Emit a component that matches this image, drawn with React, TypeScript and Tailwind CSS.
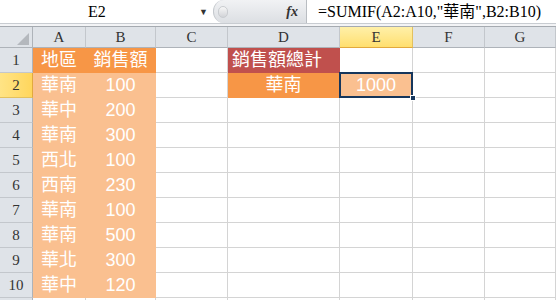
import React from 'react';

const cols = ['A', 'B', 'C', 'D', 'E', 'F', 'G'];

const data: [string, string][] = [
  ['華南', '100'],
  ['華中', '200'],
  ['華南', '300'],
  ['西北', '100'],
  ['西南', '230'],
  ['華南', '100'],
  ['華南', '500'],
  ['華北', '300'],
  ['華中', '120'],
];

const cellFont = { fontFamily: '"Liberation Sans", "Noto Sans CJK TC", sans-serif' };
const headFont = { fontFamily: '"Liberation Serif", "Noto Sans CJK TC", serif' };

type Cell = { text?: string; cls?: string; align?: string };

const App = () => {
  // rows of cells for columns A..G
  const rows: Cell[][] = [];
  for (let r = 1; r <= 11; r++) {
    const row: Cell[] = cols.map(() => ({}));
    if (r === 1) {
      row[0] = { text: '地區', cls: 'bg-[#f79646] border-[#f79646]' };
      row[1] = { text: '銷售額', cls: 'bg-[#f79646] border-[#f79646]' };
      row[3] = { text: '銷售額總計', cls: 'bg-[#c0504d] border-[#c0504d]', align: 'justify-start pl-[4px]' };
    } else if (r <= 10) {
      const d = data[r - 2];
      row[0] = { text: d[0], cls: 'bg-[#fac090] border-[#fac090]' };
      row[1] = { text: d[1], cls: 'bg-[#fac090] border-[#fac090]' };
      if (r === 2) {
        row[3] = { text: '華南', cls: 'bg-[#f79646] border-[#f79646]' };
      }
    }
    rows.push(row);
  }

  return (
    <div className="w-[556px] h-[300px] overflow-hidden bg-white select-none">
      {/* formula bar */}
      <div className="flex h-[23px] items-stretch">
        <div className="w-[213px] flex items-center bg-white pl-[88px] pr-[5px]">
          <span className="flex-1 text-[16px] text-black" style={headFont}>E2</span>
          <span className="text-[9px] text-[#333]">▼</span>
        </div>
        <div className="w-[93px] flex items-center bg-gradient-to-b from-[#f1f2f4] to-[#dcdfe3] rounded-l-[11px] border-l border-[#c4c8cd] pl-[4px] pr-[8px]">
          <div className="w-[10px] h-[12px] rounded-full bg-gradient-to-b from-[#f7f7f7] to-[#d2d4d8] border border-[#c9ccd0]"></div>
          <span className="ml-auto text-[14px] italic font-bold text-[#333]" style={headFont}>fx</span>
        </div>
        <div className="w-px bg-[#b9bdc2]"></div>
        <div className="flex-1 flex items-center pl-[11px] text-[16px] text-black whitespace-nowrap" style={headFont}>
          =SUMIF(A2:A10,"華南",B2:B10)
        </div>
      </div>
      <div className="h-px bg-[#c8ccd1]"></div>
      <div className="h-[2px] bg-[#f3f4f6]"></div>
      <div className="h-px bg-[#a5aab0]"></div>

      {/* grid */}
      <div className="grid grid-cols-[33px_53px_70px_72px_112px_73px_72px_71px] grid-rows-[21px_repeat(11,25px)]">
        {/* corner */}
        <div className="bg-[#dfe3e8] border-r border-b border-[#aeb3b9] flex items-end justify-end pr-[3px] pb-[2px]">
          <div className="w-0 h-0 border-l-[12px] border-l-transparent border-b-[12px] border-b-[#b4b8bd]"></div>
        </div>
        {cols.map(c => (
          <div
            key={c}
            className={`flex items-center justify-center text-[15px] border-r border-b ${
              c === 'E'
                ? 'bg-gradient-to-b from-[#fff0a8] to-[#ffdf6e] border-r-[#e3c15f] border-b-[#e2a93d] text-[#333]'
                : 'bg-[#dfe3e8] border-r-[#c3c7cc] border-b-[#aeb3b9] text-[#333]'
            }`}
            style={headFont}
          >
            {c}
          </div>
        ))}
        {rows.map((row, i) => (
          <React.Fragment key={i}>
            <div
              className={`flex items-center justify-center text-[15px] border-r border-b ${
                i === 1
                  ? 'bg-gradient-to-r from-[#ffe485] to-[#ffd65c] border-r-[#e2a93d] border-b-[#e3c15f] text-[#333]'
                  : 'bg-[#dfe3e8] border-r-[#aeb3b9] border-b-[#c3c7cc] text-[#333]'
              }`}
              style={headFont}
            >
              {i < 10 ? i + 1 : ''}
            </div>
            {row.map((cell, j) => {
              if (i === 1 && j === 4) {
                return (
                  <div key={j} className="relative border-r border-b border-[#d4d4d4]">
                    <div className="absolute -left-px -top-px -right-px -bottom-px border-2 border-[#16365c] bg-[#fac090] flex items-center justify-center text-white text-[18px]" style={cellFont}>
                      1000
                    </div>
                    <div className="absolute -right-[4px] -bottom-[4px] w-[6px] h-[6px] bg-[#16365c] border border-white"></div>
                  </div>
                );
              }
              return (
                <div
                  key={j}
                  className={`flex items-center text-[18px] text-white whitespace-nowrap overflow-visible border-r border-b ${cell.cls ?? 'border-[#d4d4d4] bg-white'} ${cell.align ?? 'justify-center'}`}
                  style={cellFont}
                >
                  {cell.text}
                </div>
              );
            })}
          </React.Fragment>
        ))}
      </div>
    </div>
  );
};

export default App;
